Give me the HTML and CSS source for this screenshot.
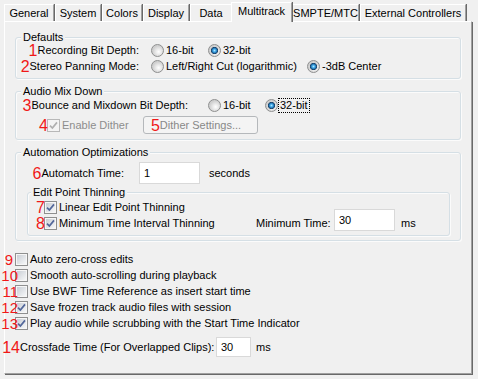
FILE: index.html
```
<!DOCTYPE html>
<html lang="en">
<head>
<meta charset="utf-8">
<title>Preferences - Multitrack</title>
<link rel="stylesheet" href="styles.css">
</head>
<body>
<div class="tabs">
  <div class="tab t-general">General</div>
  <div class="tab t-system">System</div>
  <div class="tab t-colors">Colors</div>
  <div class="tab t-display">Display</div>
  <div class="tab t-data">Data</div>
  <div class="tab t-multi active">Multitrack</div>
  <div class="tab t-smpte">SMPTE/MTC</div>
  <div class="tab t-ext">External Controllers</div>
</div>
<div class="panel">
  <div class="group g-defaults">
    <span class="legend">Defaults</span>
    <div class="row">
      <div class="lbl lbl-a"><span class="tagged"><span class="num">1</span>Recording Bit Depth:</span></div>
      <span class="opt o16"><span class="radio"></span>16-bit</span>
      <span class="opt"><span class="radio on"></span>32-bit</span>
    </div>
    <div class="row">
      <div class="lbl lbl-a"><span class="tagged"><span class="num">2</span>Stereo Panning Mode:</span></div>
      <span class="opt olr"><span class="radio"></span>Left/Right Cut (logarithmic)</span>
      <span class="opt"><span class="radio on"></span>-3dB Center</span>
    </div>
  </div>

  <div class="group g-mix">
    <span class="legend">Audio Mix Down</span>
    <div class="row">
      <div class="lbl lbl-b"><span class="tagged"><span class="num">3</span>Bounce and Mixdown Bit Depth:</span></div>
      <span class="opt o16"><span class="radio"></span>16-bit</span>
      <span class="opt"><span class="radio on"></span><span class="focus">32-bit</span></span>
    </div>
    <div class="row row-btn">
      <div class="dither">
        <span class="cb dis tagged"><span class="num">4</span><svg viewBox="0 0 11 11"><path d="M2 5.6 4.4 8 9 2.4"/></svg></span>
        <span class="dis-text">Enable Dither</span>
      </div>
      <div class="btn"><span class="tagged"><span class="num">5</span>Dither Settings...</span></div>
    </div>
  </div>

  <div class="group g-auto">
    <span class="legend">Automation Optimizations</span>
    <div class="row row-auto">
      <div class="lbl lbl-c"><span class="tagged"><span class="num">6</span>Automatch Time:</span></div>
      <input class="field f-auto" type="text" value="1" readonly>
      <span class="unit-sec">seconds</span>
    </div>
    <div class="group g-thin">
      <span class="legend">Edit Point Thinning</span>
      <div class="cbrow">
        <span class="cb tagged"><span class="num">7</span><svg viewBox="0 0 11 11"><path d="M2 5.6 4.4 8 9 2.4"/></svg></span>
        <span>Linear Edit Point Thinning</span>
      </div>
      <div class="row row-min">
        <div class="cbpart">
          <span class="cb tagged"><span class="num">8</span><svg viewBox="0 0 11 11"><path d="M2 5.6 4.4 8 9 2.4"/></svg></span>
          <span>Minimum Time Interval Thinning</span>
        </div>
        <span class="mt-lbl">Minimum Time:</span>
        <input class="field f-min" type="text" value="30" readonly>
        <span class="unit-ms">ms</span>
      </div>
    </div>
  </div>

  <div class="bottom">
    <div class="brow">
      <span class="cb tagged"><span class="num n9">9</span></span>
      <span>Auto zero-cross edits</span>
    </div>
    <div class="brow">
      <span class="cb tagged"><span class="num">10</span></span>
      <span>Smooth auto-scrolling during playback</span>
    </div>
    <div class="brow">
      <span class="cb tagged"><span class="num">11</span></span>
      <span>Use BWF Time Reference as insert start time</span>
    </div>
    <div class="brow">
      <span class="cb tagged"><span class="num">12</span><svg viewBox="0 0 11 11"><path d="M2 5.6 4.4 8 9 2.4"/></svg></span>
      <span>Save frozen track audio files with session</span>
    </div>
    <div class="brow">
      <span class="cb tagged"><span class="num">13</span><svg viewBox="0 0 11 11"><path d="M2 5.6 4.4 8 9 2.4"/></svg></span>
      <span>Play audio while scrubbing with the Start Time Indicator</span>
    </div>
    <div class="row row14">
      <span class="xf-lbl"><span class="tagged"><span class="num">14</span>Crossfade Time (For Overlapped Clips):</span></span>
      <input class="field f-xf" type="text" value="30" readonly>
      <span class="unit-xf">ms</span>
    </div>
  </div>
</div>
</body>
</html>
```
FILE: styles.css
```
* { box-sizing: border-box; }
html, body { margin: 0; padding: 0; }
body {
  background: #f0f0f0;
  font-family: "Liberation Sans", Arial, sans-serif;
  font-size: 11px;
  color: #000;
  width: 478px;
  height: 379px;
  overflow: hidden;
}

/* Tabs */
.tabs {
  display: flex;
  align-items: flex-end;
  height: 21px;
  padding-left: 4px;
}
.tab {
  flex: none;
  height: 17px;
  margin-right: 1px;
  border-top: 1px solid #fff;
  border-left: 1px solid #fff;
  border-right: 1px solid #a0a0a0;
  box-shadow: 1px 0 0 #696969;
  text-align: center;
  line-height: 16px;
  white-space: nowrap;
}
.t-general { width: 50px; }
.t-system { width: 46px; }
.t-colors { width: 40px; }
.t-display { width: 46px; }
.t-data { width: 42px; }
.t-multi { width: 61px; margin-left: -2px; margin-right: 0; }
.t-smpte { width: 67px; }
.t-ext { width: 106px; }
.tab.active {
  position: relative;
  z-index: 1;
  height: 20px;
  margin-bottom: -1px;
  padding-bottom: 3px;
  background: #f0f0f0;
}

/* Panel */
.panel {
  width: 468px;
  height: 353px;
  margin-left: 4px;
  border: 1px solid;
  border-color: #fff #a0a0a0 #a0a0a0 #fff;
  box-shadow: 1px 1px 0 #696969;
}

/* Group boxes */
.group {
  position: relative;
  margin: 12px 10px 0;
  border: 1px solid #d5dfe5;
  border-radius: 3px;
  box-shadow: inset 1px 1px 0 #fbfbfb, 1px 1px 0 #fbfbfb;
}
.g-defaults { margin-top: 15px; padding: 4px 0; }
.g-mix { padding: 5px 0; }
.g-auto { padding: 9px 0 4px; }
.g-thin { margin: 8px 10px 0 11px; padding: 6px 0 4px; }
.legend {
  position: absolute;
  top: -7px;
  left: 5px;
  padding: 0 2px;
  line-height: 13px;
  background: #f0f0f0;
  white-space: nowrap;
}
.g-thin .legend { left: 3px; }

/* Rows */
.row {
  display: flex;
  align-items: center;
  height: 16px;
  white-space: nowrap;
}
.lbl {
  flex: none;
  display: flex;
  justify-content: flex-end;
}
.lbl-a { width: 135px; padding-right: 12px; }
.lbl-b { width: 192px; padding-right: 20px; }
.lbl-c { width: 123px; padding-right: 15px; }

.tagged {
  position: relative;
  display: inline-block;
}
.num {
  position: absolute;
  right: 100%;
  top: 50%;
  margin-top: -6px;
  font-size: 16px;
  line-height: 13px;
  color: #f01818;
  white-space: nowrap;
}
.brow .num {
  font-size: 15px;
  margin-right: -2px;
}
.brow .n9 { margin-right: 3px; }

/* Radio buttons */
.opt {
  flex: none;
  display: flex;
  align-items: center;
  margin-right: 14px;
}
.o16 { width: 57px; margin-right: 0; }
.olr { width: 156px; margin-right: 0; }
.radio {
  flex: none;
  width: 13px;
  height: 13px;
  margin-right: 2px;
  border-radius: 50%;
  border: 1px solid #8e8f8f;
  background: radial-gradient(circle at 60% 62%, #ffffff 0, #ececec 2.5px, #cfcfcf 6px);
}
.radio.on {
  background:
    radial-gradient(circle at 50% 50%, #aee6ff 0, #45abe8 1.4px, #1d6aa6 2.6px, #1a3c60 3.3px, rgba(0,0,0,0) 3.9px),
    radial-gradient(circle at 60% 62%, #ffffff 0, #ececec 2.5px, #cfcfcf 6px);
}
.focus {
  outline: 1px dotted #000;
  padding: 0 1px;
  margin-left: -1px;
  line-height: 13px;
}

/* Checkboxes */
.cb {
  flex: none;
  width: 13px;
  height: 13px;
  margin-right: 2px;
  border: 1px solid #8e8f8f;
  background: linear-gradient(135deg, #c9ced5, #f6f7f8) center / 9px 9px no-repeat, #f6f6f6;
}
.cb svg {
  display: block;
  width: 11px;
  height: 11px;
}
.cb svg path {
  fill: none;
  stroke: #52679a;
  stroke-width: 1.7;
}
.cb.dis {
  border-color: #b8b8b8;
  background: #f4f4f4;
}
.cb.dis svg path { stroke: #b0b0b0; }
.dis-text { color: #8d8d8d; }

.row-btn { height: 18px; margin-top: 3px; }
.dither {
  flex: none;
  display: flex;
  align-items: center;
  width: 127px;
  padding-left: 31px;
}
.btn {
  flex: none;
  width: 115px;
  height: 18px;
  border: 1px solid #b5b8bb;
  border-radius: 3px;
  background: #f4f4f4;
  color: #888;
  text-align: center;
  line-height: 16px;
}

/* Text fields */
.field {
  flex: none;
  margin: 0;
  border: 1px solid #d9d9d9;
  background: #fff;
  padding: 0 4px;
  font: inherit;
  color: #000;
  outline: none;
}
.row-auto { height: 22px; }
.f-auto { width: 61px; height: 22px; }
.unit-sec { margin-left: 9px; }

.cbrow {
  display: flex;
  align-items: center;
  height: 16px;
  padding-left: 16px;
  white-space: nowrap;
}
.cbpart {
  flex: none;
  display: flex;
  align-items: center;
  width: 228px;
  padding-left: 16px;
}
.mt-lbl { flex: none; width: 78px; }
.f-min {
  width: 61px;
  height: 22px;
  align-self: flex-start;
  margin-top: -6px;
}
.unit-ms { margin-left: 6px; }

/* Bottom options */
.bottom { margin-top: 10px; }
.brow {
  display: flex;
  align-items: center;
  height: 16px;
  padding-left: 10px;
  white-space: nowrap;
}
.row14 {
  margin-top: 6px;
  height: 20px;
  padding-left: 15px;
}
.xf-lbl { flex: none; width: 196px; }
.f-xf { width: 35px; height: 20px; }
.unit-xf { margin-left: 5px; }
```
